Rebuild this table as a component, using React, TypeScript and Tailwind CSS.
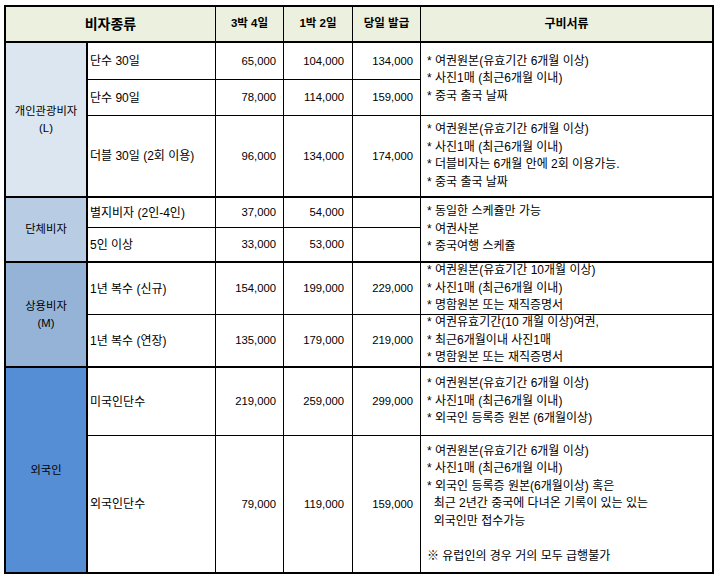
const font = "font-['Liberation_Sans','Noto_Sans_CJK_KR',sans-serif]";

type Row = {
  name: string;
  a: string;
  b: string;
  c: string;
  bottom: "thin" | "thick" | "none";
  rowClass: string;
};

const rows: Row[] = [
  { name: "단수 30일", a: "65,000", b: "104,000", c: "134,000", bottom: "thin", rowClass: "row-start-2" },
  { name: "단수 90일", a: "78,000", b: "114,000", c: "159,000", bottom: "thin", rowClass: "row-start-3" },
  { name: "더블 30일 (2회 이용)", a: "96,000", b: "134,000", c: "174,000", bottom: "thick", rowClass: "row-start-4" },
  { name: "별지비자 (2인-4인)", a: "37,000", b: "54,000", c: "", bottom: "thin", rowClass: "row-start-5" },
  { name: "5인 이상", a: "33,000", b: "53,000", c: "", bottom: "thick", rowClass: "row-start-6" },
  { name: "1년 복수 (신규)", a: "154,000", b: "199,000", c: "229,000", bottom: "thin", rowClass: "row-start-7" },
  { name: "1년 복수 (연장)", a: "135,000", b: "179,000", c: "219,000", bottom: "thick", rowClass: "row-start-8" },
  { name: "미국인단수", a: "219,000", b: "259,000", c: "299,000", bottom: "thin", rowClass: "row-start-9" },
  { name: "외국인단수", a: "79,000", b: "119,000", c: "159,000", bottom: "none", rowClass: "row-start-10" },
];

const bottomClass = (b: Row["bottom"]) =>
  b === "thin" ? "border-b border-black" : b === "thick" ? "border-b-2 border-black" : "";

function Docs({ lines, className }: { lines: string[]; className: string }) {
  return (
    <div className={`col-start-6 flex flex-col justify-center pl-[6px] text-[12px] leading-[17.5px] ${className}`}>
      {lines.map((l, i) => (
        <div key={i} className="whitespace-pre h-[17.5px]">
          {l}
        </div>
      ))}
    </div>
  );
}

function Category({ children, className }: { children: React.ReactNode; className: string }) {
  return (
    <div
      className={`col-start-1 flex flex-col items-center justify-center text-center leading-[17px] border-r-2 border-black ${className}`}
    >
      {children}
    </div>
  );
}

export default function App() {
  return (
    <div className={`bg-white w-[720px] h-[578px] pt-[5px] pl-[4px] text-black text-[11.3px] ${font}`}>
      <div className="w-[710px] h-[569px] border-2 border-black grid grid-cols-[82px_128px_68px_69px_68px_291px] grid-rows-[36px_37px_36px_82px_30px_35px_52px_53px_68px_136px]">
        {/* header */}
        <div className="col-span-2 row-start-1 flex items-center justify-center bg-[#ebf1de] border-r border-b-2 border-black text-[14px] font-bold">
          비자종류
        </div>
        <div className="row-start-1 flex items-center justify-center bg-[#ebf1de] border-r border-b-2 border-black text-[11.5px] font-bold">
          3박 4일
        </div>
        <div className="row-start-1 flex items-center justify-center bg-[#ebf1de] border-r border-b-2 border-black text-[11.5px] font-bold">
          1박 2일
        </div>
        <div className="row-start-1 flex items-center justify-center bg-[#ebf1de] border-r border-b-2 border-black text-[11.5px] font-bold">
          당일 발급
        </div>
        <div className="row-start-1 flex items-center justify-center bg-[#ebf1de] border-b-2 border-black text-[12px] font-bold">
          구비서류
        </div>

        {/* categories */}
        <Category className="row-start-2 row-span-3 bg-[#dce6f1] border-b-2">
          <span>개인관광비자</span>
          <span>(L)</span>
        </Category>
        <Category className="row-start-5 row-span-2 bg-[#b8cce4] border-b-2">
          <span>단체비자</span>
        </Category>
        <Category className="row-start-7 row-span-2 bg-[#95b3d7] border-b-2">
          <span>상용비자</span>
          <span>(M)</span>
        </Category>
        <Category className="row-start-9 row-span-2 bg-[#558ed5]">
          <span>외국인</span>
        </Category>

        {/* price rows */}
        {rows.map((r) => (
          <div key={r.name} className="contents">
            <div className={`col-start-2 ${r.rowClass} flex items-center pl-[2px] text-[12px] border-r border-black ${bottomClass(r.bottom)}`}>
              {r.name}
            </div>
            <div className={`col-start-3 ${r.rowClass} flex items-center justify-end pr-[7px] border-r border-black ${bottomClass(r.bottom)}`}>
              {r.a}
            </div>
            <div className={`col-start-4 ${r.rowClass} flex items-center justify-end pr-[8px] border-r border-black ${bottomClass(r.bottom)}`}>
              {r.b}
            </div>
            <div className={`col-start-5 ${r.rowClass} flex items-center justify-end pr-[7px] border-r border-black ${bottomClass(r.bottom)}`}>
              {r.c}
            </div>
          </div>
        ))}

        {/* documents */}
        <Docs
          className="row-start-2 row-span-2 border-b border-black"
          lines={["* 여권원본(유효기간 6개월 이상)", "* 사진1매 (최근6개월 이내)", "* 중국 출국 날짜"]}
        />
        <Docs
          className="row-start-4 border-b-2 border-black"
          lines={[
            "* 여권원본(유효기간 6개월 이상)",
            "* 사진1매 (최근6개월 이내)",
            "* 더블비자는 6개월 안에 2회 이용가능.",
            "* 중국 출국 날짜",
          ]}
        />
        <Docs
          className="row-start-5 row-span-2 border-b-2 border-black"
          lines={["* 동일한 스케쥴만 가능", "* 여권사본", "* 중국여행 스케쥴"]}
        />
        <Docs
          className="row-start-7 border-b border-black"
          lines={["* 여권원본(유효기간 10개월 이상)", "* 사진1매 (최근6개월 이내)", "* 명함원본 또는 재직증명서"]}
        />
        <Docs
          className="row-start-8 border-b-2 border-black"
          lines={["* 여권유효기간(10 개월 이상)여권,", "* 최근6개월이내 사진1매", "* 명함원본 또는 재직증명서"]}
        />
        <Docs
          className="row-start-9 border-b border-black"
          lines={["* 여권원본(유효기간 6개월 이상)", "* 사진1매 (최근6개월 이내)", "* 외국인 등록증 원본 (6개월이상)"]}
        />
        <Docs
          className="row-start-10"
          lines={[
            "* 여권원본(유효기간 6개월 이상)",
            "* 사진1매 (최근6개월 이내)",
            "* 외국인 등록증 원본(6개월이상) 혹은",
            "  최근 2년간 중국에 다녀온 기록이 있는 있는",
            "  외국인만 접수가능",
            " ",
            "※ 유럽인의 경우 거의 모두 급행불가",
          ]}
        />
      </div>
    </div>
  );
}
